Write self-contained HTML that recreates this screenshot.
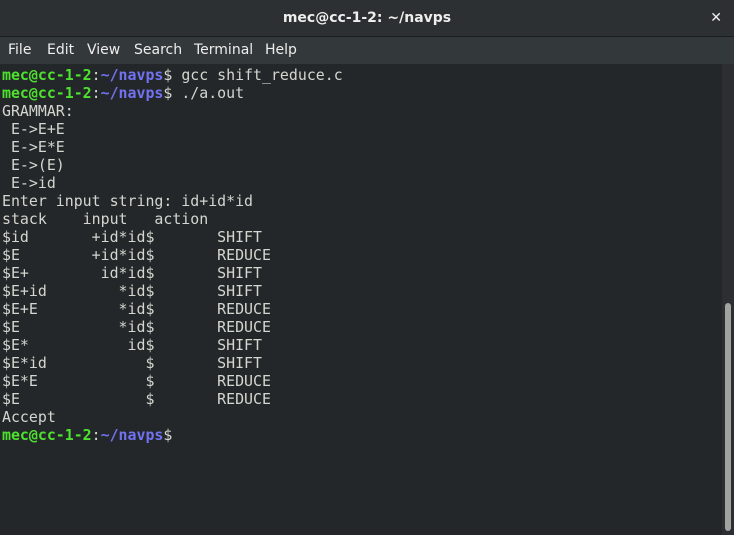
<!DOCTYPE html>
<html><head><style>
body{margin:0;width:734px;height:535px;overflow:hidden;background:#232729;font-family:"DejaVu Sans",sans-serif;position:relative}
.title{position:absolute;left:0;top:0;width:734px;height:36px;background:#2c3033;color:#eeeeec;font-size:14px;font-weight:bold;text-align:center;line-height:36px}
.x{position:absolute;right:12px;top:0;line-height:36px;font-size:14px;color:#eee;font-weight:bold}
.sep{position:absolute;top:36px;left:0;width:734px;height:1px;background:#1b1d1e}
.menu{position:absolute;top:37px;left:0;width:734px;height:27px;background:#33383b;color:#eeeeec;font-size:14px;line-height:27px}
.menu span{position:absolute;top:0}
pre{position:absolute;left:2px;top:66px;margin:0;font-family:"DejaVu Sans Mono",monospace;font-size:14.9px;line-height:18px;color:#d3d7cf}
.g{color:#4ee22e;font-weight:bold}.b{color:#7272f0;font-weight:bold}
.sb{position:absolute;left:722px;top:64px;width:12px;height:471px;background:#2b2f31}
.th{position:absolute;left:725px;top:303px;width:6px;height:228px;background:#a2a2a0;border-radius:3px}
</style></head><body>
<div class="title">mec@cc-1-2: ~/navps</div><div class="x">✕</div>
<div class="sep"></div>
<div class="menu"><span style="left:8px">File</span><span style="left:47px">Edit</span><span style="left:87px">View</span><span style="left:134px">Search</span><span style="left:194px">Terminal</span><span style="left:265px">Help</span></div>
<pre><span class="g">mec@cc-1-2</span>:<span class="b">~/navps</span>$ gcc shift_reduce.c
<span class="g">mec@cc-1-2</span>:<span class="b">~/navps</span>$ ./a.out
GRAMMAR:
 E->E+E
 E->E*E
 E->(E)
 E->id
Enter input string: id+id*id
stack    input   action
$id       +id*id$       SHIFT
$E        +id*id$       REDUCE
$E+        id*id$       SHIFT
$E+id        *id$       SHIFT
$E+E         *id$       REDUCE
$E           *id$       REDUCE
$E*           id$       SHIFT
$E*id           $       SHIFT
$E*E            $       REDUCE
$E              $       REDUCE
Accept
<span class="g">mec@cc-1-2</span>:<span class="b">~/navps</span>$</pre>
<div class="sb"></div><div class="th"></div>
</body></html>
